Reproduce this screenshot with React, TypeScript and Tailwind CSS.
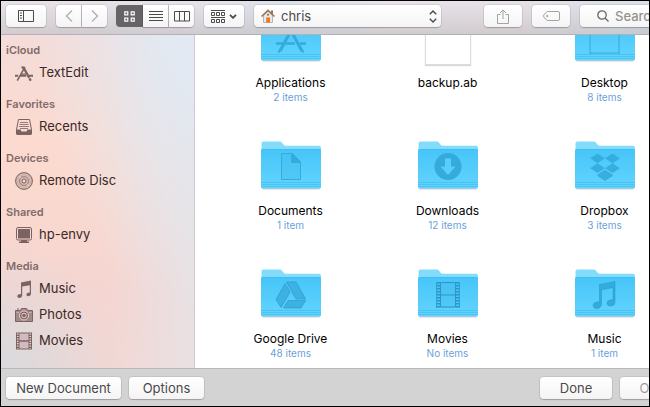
import type { ReactNode } from 'react'

const glyph = '#34aadd'

function AppsMark() {
  return (
    <g fill="none" stroke="currentColor" strokeWidth="2">
      <path d="M9 1.500L17.500 17" strokeWidth="2.600" strokeDasharray="14 .8 4" />
      <path d="M11 2L2.500 17" strokeWidth="1.800" />
      <path d="M7.500 1.200L10 4.500" />
      <path d="M0 11.500h3.500M6 11.500h6.500M15.500 11.500H20" strokeWidth="2.200" />
      <path d="M7.500 10l5-.5" strokeWidth="1.500" />
    </g>
  )
}

function TextEditIcon() {
  return (
    <svg viewBox="0 0 20 18" className="h-[17px] w-[18px]">
      <AppsMark />
    </svg>
  )
}

function RecentsIcon() {
  return (
    <svg viewBox="0 0 18 18" className="size-[18px]">
      <path d="M3.500 1.500h11l2 10v4.500h-15v-4.500z" fill="none" stroke="currentColor" />
      <path d="M1 11.500h4.500l1 2h5l1-2H17V15a2 2 0 0 1-2 2H3a2 2 0 0 1-2-2z" fill="currentColor" />
      <path d="M5 4.500h8M4.500 6.500h9M4 8.500h10M5 10.500h8" stroke="currentColor" strokeOpacity=".8" />
    </svg>
  )
}

function DiscIcon() {
  return (
    <svg viewBox="0 0 18 18" className="size-[18px]" fill="none" stroke="currentColor">
      <circle cx="9" cy="9" r="8.400" fill="currentColor" fillOpacity=".3" />
      <circle cx="9" cy="9" r="4.500" strokeOpacity=".6" />
      <circle cx="9" cy="9" r="2" fill="#f8dad3" />
      <path d="M4 4l2.500 2.500M11.500 11.500L14 14" stroke="#f8dad3" strokeOpacity=".7" />
    </svg>
  )
}

function DisplayIcon() {
  return (
    <svg viewBox="0 0 18 18" className="size-[18px]">
      <rect x="1.500" y="1.500" width="15" height="12.500" rx="1.500" fill="none" stroke="currentColor" />
      <rect x="3" y="3" width="12" height="9.500" fill="currentColor" />
      <path d="M6 14h6v1.500h2V17H4v-1.500h2z" fill="currentColor" />
    </svg>
  )
}

function NoteIcon() {
  return (
    <svg viewBox="0 0 18 18" className="size-[18px]">
      <path
        d="M6 2.500L16 .5v13.200c0 1.600-1.200 2.500-2.600 2.500s-2-.7-2-1.600c0-1.400 1.400-2.200 3.400-2.200V5.200L7.200 6.600v8.700c0 1.600-1.300 2.600-2.800 2.600-1.400 0-2.100-.8-2.100-1.700 0-1.500 1.500-2.200 3.700-2.200z"
        fill="currentColor"
      />
    </svg>
  )
}

function CameraIcon() {
  return (
    <svg viewBox="0 0 18 18" className="size-[18px]">
      <path d="M.5 4.500h4.500l1.500-2h5l1.500 2h4.500v11H.5z" fill="currentColor" fillOpacity=".65" stroke="currentColor" />
      <path d="M2 3h2" stroke="currentColor" />
      <circle cx="9" cy="9.500" r="4.500" fill="currentColor" stroke="#f3d3ce" />
      <circle cx="9" cy="9.500" r="2.300" fill="none" stroke="#f3d3ce" />
      <path d="M1.500 6.500h2.500M14 6.500h2.500" stroke="#f3d3ce" strokeOpacity=".5" />
    </svg>
  )
}

function FilmIcon() {
  return (
    <svg viewBox="0 0 18 18" className="size-[18px]">
      <rect x="1" y=".5" width="16" height="17" fill="currentColor" />
      <path d="M4.500 1.500h9v6.800h-9zM4.500 9.700h9v6.800h-9z" fill="#d0bcc0" />
      <path d="M2.750 1.500v15M15.250 1.500v15" stroke="#f3dcd8" strokeWidth="1.500" strokeDasharray="1.200 1.200" />
    </svg>
  )
}

function Folder({ id, children }: { id: string; children: ReactNode }) {
  return (
    <svg viewBox="0 0 60 50" className="h-[50px] w-[60px] shrink-0" aria-hidden="true">
      <defs>
        <linearGradient id={id} x1="0" y1="0" x2="0" y2="1">
          <stop offset="0" stopColor="#46c5f8" />
          <stop offset="1" stopColor="#62d4ff" />
        </linearGradient>
      </defs>
      <rect x="1" y="10" width="58" height="38.500" rx="1.500" fill="#000" fillOpacity=".2" />
      <path d="M.5 2.500a2 2 0 0 1 2-2h16c1.500 0 2 .5 3 1.700l1.200 1.500c.7.800 1.300 1 2.300 1H58a2 2 0 0 1 2 2V30H.5z" fill="#83dcfc" />
      <path d="M0 9.500a1.500 1.500 0 0 1 1.500-1.500h57A1.500 1.500 0 0 1 60 9.500V46a1.500 1.500 0 0 1-1.500 1.500h-57A1.500 1.500 0 0 1 0 46z" fill={`url(#${id})`} />
      <path d="M1 8.500h58" stroke="#3cb6ea" strokeOpacity=".5" />
      <path d="M0 41.500h60M0 43.500h60M0 45.500h60" stroke="#38afe2" strokeOpacity=".45" />
      {children}
    </svg>
  )
}

function ApplicationsGlyph() {
  return (
    <g stroke={glyph} fill="none" strokeWidth="3">
      <path d="M28 14L41 38" />
      <path d="M32 14L19 38" />
      <path d="M15 30.500h19M39 30.500h6" strokeWidth="2.500" />
      <path d="M39.500 35l3 4.500M20.500 35l-3 4.500" strokeWidth="2" />
    </g>
  )
}

function DocumentGlyph() {
  return (
    <g stroke={glyph}>
      <path d="M20.500 12.500h11l8 8v18h-19z" fill="#3db6e8" fillOpacity=".3" />
      <path d="M30.500 12.500l9 9h-9z" fill={glyph} />
    </g>
  )
}

function DownloadGlyph() {
  return (
    <g>
      <circle cx="30" cy="25.500" r="13.500" fill={glyph} />
      <path d="M27 17.500h6v8h4.500L30 34l-7.500-8.500H27z" fill="#59cefb" />
    </g>
  )
}

function DropboxGlyph() {
  return (
    <g fill={glyph} fillOpacity=".9">
      <path d="M22.500 12.500l7.500 4.800-7.500 5-7.300-5z" />
      <path d="M37.500 12.500l7.300 4.800-7.300 5-7.500-5z" />
      <path d="M22.500 22.300L30 27.300l-7.500 4.800-7.300-4.800z" />
      <path d="M37.500 22.300l7.300 5-7.300 4.800-7.500-4.800z" />
      <path d="M30 28.800l7.500 4.800v1.500L30 40l-7.500-4.900v-1.500z" />
    </g>
  )
}

function DriveGlyph() {
  return (
    <g fill="#3cb1e2" stroke="#2d9acb" strokeWidth=".7">
      <path d="M25.500 13h9.500l9.500 17h-9.500z" />
      <path d="M24 14.500l5 8.500-9 15.500-5-8z" />
      <path d="M27 31.500h17.500L40 39H22.500z" />
    </g>
  )
}

function MoviesGlyph() {
  return (
    <g>
      <path d="M18.500 13h23v26h-23z" fill="#38afe0" fillOpacity=".25" />
      <path d="M22.500 13.500h15v24.500h-15zM22.500 26h15" fill="none" stroke="#2897c9" />
      <path d="M20.500 13v26M39.500 13v26" stroke="#2897c9" strokeWidth="3" strokeDasharray="1.500 1.500" />
      <path d="M18.500 13v26M41.500 13v26" stroke="#2897c9" strokeWidth=".8" />
    </g>
  )
}

function MusicGlyph() {
  return (
    <path
      d="M24.500 15.500L40 12.500V33c0 2.500-2 4-4.500 4s-3.500-1.300-3.500-2.800c0-2.400 2.500-3.500 6-3.500V18.500l-11.500 2.300V35c0 2.700-2 4.500-4.800 4.500-2.300 0-3.500-1.300-3.500-3 0-2.500 2.500-3.700 6.300-3.700z"
      fill={glyph}
      stroke="#2596c9"
      strokeWidth=".5"
    />
  )
}

const sections = [
  { title: 'iCloud', items: [{ name: 'TextEdit', icon: <TextEditIcon /> }] },
  { title: 'Favorites', items: [{ name: 'Recents', icon: <RecentsIcon /> }] },
  { title: 'Devices', items: [{ name: 'Remote Disc', icon: <DiscIcon /> }] },
  { title: 'Shared', items: [{ name: 'hp-envy', icon: <DisplayIcon /> }] },
  {
    title: 'Media',
    items: [
      { name: 'Music', icon: <NoteIcon /> },
      { name: 'Photos', icon: <CameraIcon /> },
      { name: 'Movies', icon: <FilmIcon /> },
    ],
  },
]

const files = [
  { name: 'Applications', info: '2 items', art: <ApplicationsGlyph /> },
  { name: 'backup.ab', info: '', art: null },
  { name: 'Desktop', info: '8 items', art: <path d="M15 14v27M44 14v27M15 40h29" fill="none" stroke={glyph} /> },
  { name: 'Documents', info: '1 item', art: <DocumentGlyph /> },
  { name: 'Downloads', info: '12 items', art: <DownloadGlyph /> },
  { name: 'Dropbox', info: '3 items', art: <DropboxGlyph /> },
  { name: 'Google Drive', info: '48 items', art: <DriveGlyph /> },
  { name: 'Movies', info: 'No items', art: <MoviesGlyph /> },
  { name: 'Music', info: '1 item', art: <MusicGlyph /> },
]

const control =
  'flex h-[22px] shrink-0 items-center justify-center rounded bg-linear-to-b from-white to-[#f4f4f5] shadow-[0_0_0_1px_rgba(0,0,0,0.07),0_1px_1px_rgba(0,0,0,0.2)]'

function Toolbar() {
  return (
    <header className="flex h-[34px] shrink-0 items-start border-b border-[#b3b1b5] bg-[linear-gradient(to_bottom,transparent,rgba(150,145,145,0.28)),linear-gradient(to_right,#e9e2e8,#e6e3ea_30%,#dce2ea_41%,#e9e4ea_55%,#e8e2e8_75%,#d9e1ea_92%)] px-[5px] pt-1 text-[#4a4a4a]">
      <button aria-label="Toggle sidebar" className={`${control} w-10`}>
        <svg viewBox="0 0 16 12" className="h-3 w-4" fill="none" stroke="currentColor">
          <path d="M.5.5h15v11H.5zM5.500.5v11M2 3h2M2 5.500h2M2 8h2" />
        </svg>
      </button>

      <div className="ml-[10px] flex gap-px">
        <button aria-label="Back" className={`${control} w-[25px] rounded-r-none`}>
          <svg viewBox="0 0 8 12" className="h-3 w-2" fill="none" stroke="#b4b4b4" strokeWidth="1.500">
            <path d="M7 .5L1.500 6 7 11.500" />
          </svg>
        </button>
        <button aria-label="Forward" className={`${control} w-[25px] rounded-l-none`}>
          <svg viewBox="0 0 8 12" className="h-3 w-2" fill="none" stroke="#b4b4b4" strokeWidth="1.500">
            <path d="M1 .5L6.500 6 1 11.500" />
          </svg>
        </button>
      </div>

      <div className="ml-[9px] flex">
        <button aria-label="Icon view" className="flex h-[22px] w-[27px] items-center justify-center rounded-l bg-[#666466] text-white">
          <svg viewBox="0 0 11 11" className="size-[11px]" fill="none" stroke="currentColor" strokeWidth="1.200">
            <path d="M.8.8h3v3h-3zM7.200.8h3v3h-3zM.8 7.200h3v3h-3zM7.200 7.200h3v3h-3z" />
          </svg>
        </button>
        <button aria-label="List view" className={`${control} w-[25px] rounded-none`}>
          <svg viewBox="0 0 14 11" className="h-[11px] w-[14px]" stroke="currentColor">
            <path d="M0 .5h14M0 3.500h14M0 6.500h14M0 9.500h14" />
          </svg>
        </button>
        <button aria-label="Column view" className={`${control} ml-px w-[25px] rounded-l-none`}>
          <svg viewBox="0 0 16 11" className="h-[11px] w-4" fill="none" stroke="currentColor">
            <path d="M.5.5h15v9.500H.5zM5.500.5v9.500M10.500.5v9.500" />
          </svg>
        </button>
      </div>

      <button aria-label="Group items" className={`${control} ml-[10px] w-10 gap-1`}>
        <svg viewBox="0 0 14 13" className="h-[13px] w-[14px]" fill="none" stroke="currentColor">
          <path d="M0 .5h14M0 7.500h14M.5 2.500h3v3h-3zM5.500 2.500h3v3h-3zM10.500 2.500h3v3h-3zM.5 9.500h3v3h-3zM5.500 9.500h3v3h-3zM10.500 9.500h3v3h-3z" />
        </svg>
        <svg viewBox="0 0 8 5" className="h-[5px] w-2" fill="none" stroke="currentColor" strokeWidth="1.800">
          <path d="M1 .8l3 3 3-3" />
        </svg>
      </button>

      <div className="relative ml-[10px] w-[190px]">
        <select aria-label="Location" className={`${control} w-full appearance-none pt-[2px] pl-[27px] text-[13px]`}>
          <option>chris</option>
        </select>
        <svg viewBox="0 0 14 14" className="pointer-events-none absolute top-1 left-[7px] size-[14px]">
          <path d="M2.500 6.500L7 2.500l4.500 4v7h-9z" fill="#e7e8ea" stroke="#9a9da1" strokeWidth=".7" />
          <path d="M10 1.500h2v4l-2-2z" fill="#97735a" />
          <path d="M.5 7.500L7 1.200l6.500 6.300" fill="none" stroke="#a2713f" strokeWidth="1.500" />
          <path d="M5.200 8.500h3.800v5H5.200z" fill="#ef7813" />
          <circle cx="7" cy="5.700" r="1" fill="#637180" />
        </svg>
        <svg viewBox="0 0 8 13" className="pointer-events-none absolute top-[5px] right-1 h-[13px] w-2" fill="none" stroke="#4a4a4a" strokeWidth="1.400">
          <path d="M.8 4.200L4 1l3.200 3.200M.8 8.800L4 12l3.200-3.200" />
        </svg>
      </div>

      <button aria-label="Share" className={`${control} ml-[43px] w-[38px]`}>
        <svg viewBox="0 0 12 15" className="h-[15px] w-3" fill="none" stroke="#a3a3a3">
          <path d="M3.500 5.500h-3v9h11v-9h-3M6 10V1M3 4l3-3 3 3" />
        </svg>
      </button>
      <button aria-label="Edit tags" className={`${control} ml-[10px] w-[38px]`}>
        <svg viewBox="0 0 17 10" className="h-[10px] w-[17px]" fill="none" stroke="#a3a3a3">
          <path d="M4.500.5H15a1.500 1.500 0 0 1 1.500 1.500v6A1.500 1.500 0 0 1 15 9.500H4.500L1 6.500Q0 5 1 3.500z" />
          <circle cx="4.200" cy="5" r=".8" />
        </svg>
      </button>

      <label className={`${control} ml-[10px] w-28 justify-start pl-[17px]`}>
        <svg viewBox="0 0 12 12" className="size-3 shrink-0" fill="none" stroke="#666" strokeWidth="1.300">
          <circle cx="5" cy="5" r="4.200" />
          <path d="M8 8l3.500 3.500" />
        </svg>
        <input
          type="text"
          aria-label="Search"
          placeholder="Search"
          className="ml-[6px] w-16 bg-transparent pt-[2px] text-[13px] font-medium outline-none placeholder:text-[#939393]"
        />
      </label>
    </header>
  )
}

function Sidebar() {
  return (
    <nav className="w-[194px] shrink-0 border-r border-[#cfc8cc] bg-[radial-gradient(circle_at_0%_100%,#d9dadd,transparent_32%),radial-gradient(ellipse_at_100%_0%,#e2e9f2_8%,transparent_58%),linear-gradient(to_right,transparent_55%,#e8e1e4),linear-gradient(to_bottom,#f4dcd9,#fcdacf_32%,#f9d8cf_55%,#f5d5d1_78%,#f3d7d3)] pt-[6px] pl-[5px]">
      {sections.map((section) => (
        <div key={section.title} className="mb-[9px]">
          <h2 className="text-[11px] leading-[18px] font-semibold text-[#826b69]">{section.title}</h2>
          <ul className="pt-px">
            {section.items.map((item) => (
              <li key={item.name}>
                <a href="#" className="flex h-[26px] items-center gap-[6px] pl-[9px] text-[13px] text-[#3b2827]">
                  <span className="text-[#7b6361]">{item.icon}</span>
                  {item.name}
                </a>
              </li>
            ))}
          </ul>
        </div>
      ))}
    </nav>
  )
}

function FileGrid() {
  return (
    <main className="flex flex-1 flex-col justify-end overflow-hidden bg-white">
      <ul className="grid grid-cols-[repeat(3,157px)] pl-[17px]">
        {files.map((file, i) => (
          <li key={file.name} className="flex h-32 flex-col items-center pt-[29px]">
            {file.art ? (
              <Folder id={`folder-${i}`}>{file.art}</Folder>
            ) : (
              <span className="h-[52px] w-[46px] shrink-0 border border-[#dcdcdc] bg-white shadow-[0_1px_1px_rgba(0,0,0,0.15)]" />
            )}
            <span className={`${file.art ? 'mt-3' : 'mt-[10px]'} text-xs leading-4 text-black`}>{file.name}</span>
            <span className="text-[10px] leading-3 text-[#6a9fdc]">{file.info}</span>
          </li>
        ))}
      </ul>
    </main>
  )
}

function Footer() {
  const button = `${control} pt-[2px] text-[13px]`
  return (
    <footer className="flex h-[38px] shrink-0 items-start border-t border-[#b8b8b8] bg-[#d3d3d3] px-[5px] pt-2 text-[#4a4a4a]">
      <button className={`${button} w-[115px]`}>New Document</button>
      <button className={`${button} ml-2 w-[75px]`}>Options</button>
      <button className={`${button} ml-auto w-[72px]`}>Done</button>
      <button disabled className={`${button} ml-2 w-[72px] text-[#a0a0a0]`}>
        Open
      </button>
    </footer>
  )
}

export default function App() {
  return (
    <div className="h-screen overflow-hidden border border-black font-['Inter','Liberation_Sans',sans-serif]">
      <div className="flex h-full min-w-[696px] flex-col">
        <Toolbar />
        <div className="flex min-h-0 flex-1">
          <Sidebar />
          <FileGrid />
        </div>
        <Footer />
      </div>
    </div>
  )
}
